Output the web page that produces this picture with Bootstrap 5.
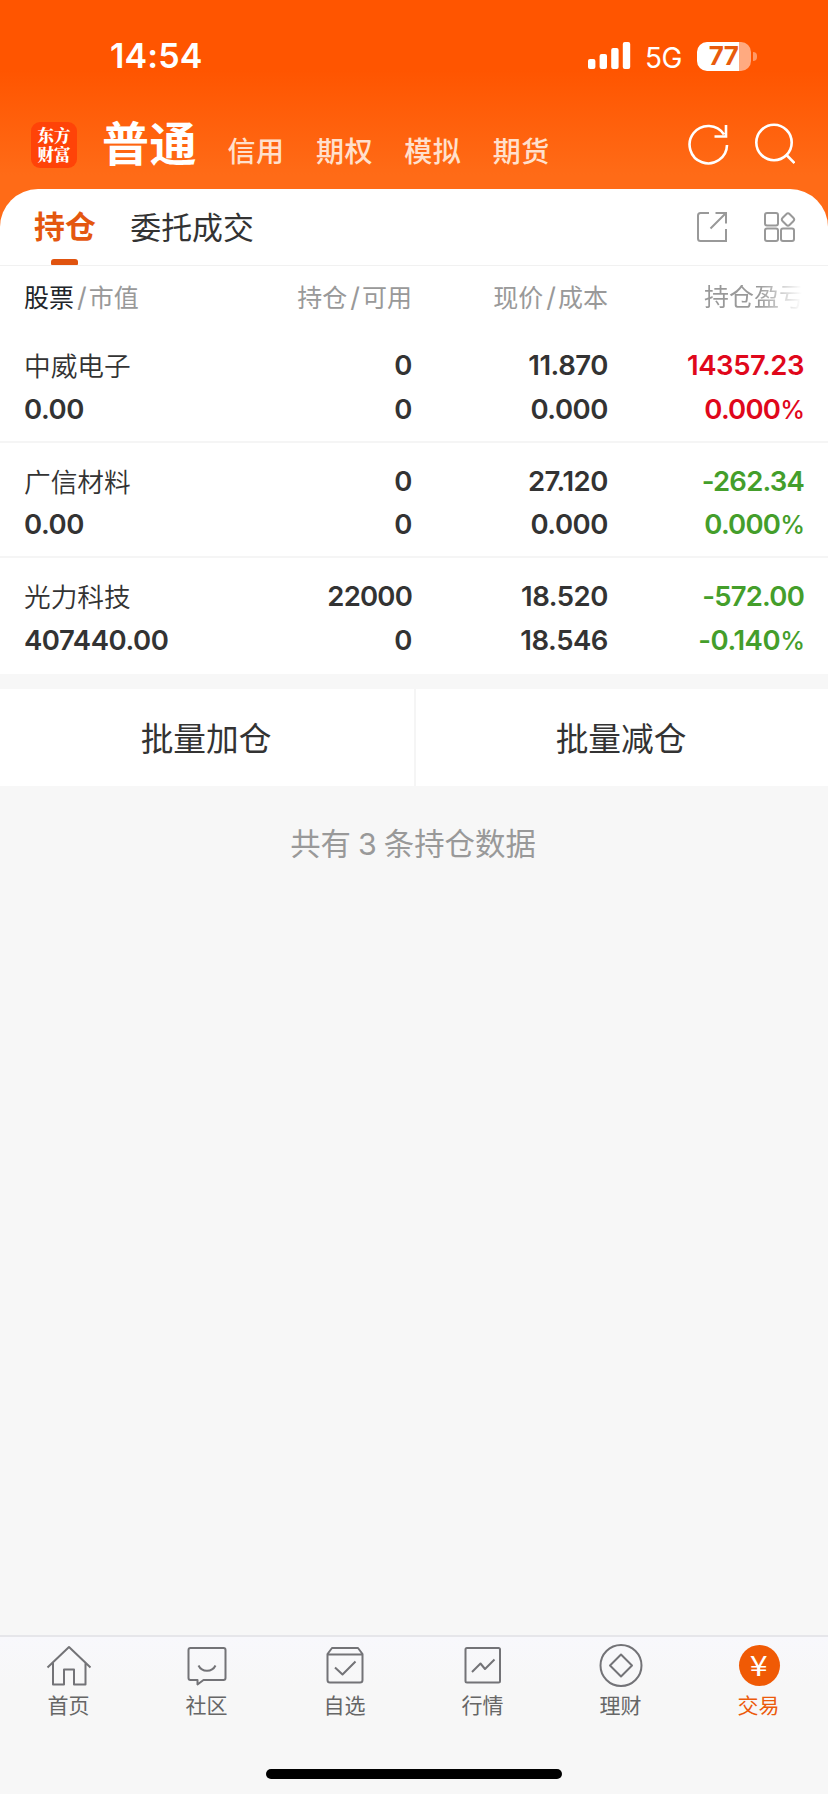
<!DOCTYPE html>
<html lang="zh-CN">
<head>
<meta charset="utf-8">
<meta name="viewport" content="width=device-width, initial-scale=1">
<title>持仓</title>
<link href="https://cdn.jsdelivr.net/npm/bootstrap@5.3.0/dist/css/bootstrap.min.css" rel="stylesheet">
<style>
body{font-family:Inter,"Noto Sans CJK SC",sans-serif;background:#f7f7f7;color:#333;line-height:1;white-space:nowrap}
.screen{height:1794px;overflow:hidden}
.hero{height:248px;background:linear-gradient(#ff5500 0,#ff5500 70px,#ff6b17 175px,#ff6b17 248px);color:#fff;margin-bottom:-59px;flex:none}
.statusbar{height:97px;padding:15px 71px 0 110px}
.clock{font-size:34px;font-weight:600;letter-spacing:.1px}
.net{font-size:28px;margin:3px 15px 0 14px;letter-spacing:-.5px}
.batt{width:54px;height:29px;border-radius:10px;background:linear-gradient(90deg,#fff 42px,#ffaa80 42px)}
.batt span{font-size:26px;font-weight:700;color:#e85a0c;letter-spacing:-.5px;margin-right:1px}
.nub{width:4px;height:9px;border-radius:0 5px 5px 0;background:#ff9966;margin-left:2px}
.appbar{height:92px;padding:1px 33px 0 31px}
.logo{width:46px;height:46px;border-radius:9px;background:#ff4308;font-size:16.5px;line-height:19.5px;font-weight:900;font-family:"Noto Serif CJK SC","Noto Sans CJK SC",serif;margin-top:3px}
.mode{font-size:47px;font-weight:700;margin-left:25px;letter-spacing:.5px}
.modes{font-size:28px;font-weight:500;color:#ffe0cd;gap:31.4px;margin:16px 0 0 30.5px;letter-spacing:.5px}
.sheet{background:#fff;border-radius:38px 38px 0 0;flex:none}
.tabs{height:77px;border-bottom:1px solid #f1f1f1;padding:0 32px 0 34px;font-size:30.9px}
.tab-on{color:#e4570f;font-weight:700;height:76px;padding-top:1px}
.tab-on::after{content:"";position:absolute;left:17px;bottom:0;width:27px;height:6px;border-radius:3px 3px 1px 1px;background:#e0530f}
.tab-off{margin-left:34.5px;padding-top:2px}
.holding{display:grid;grid-template-columns:200px 188px 196px 196px;padding:0 24px}
.heads{height:61px;align-items:center;font-size:25px;color:#999;padding-top:1px}
.heads i{font-style:normal;font-size:27px;margin:0 2px 0 3px}
.fade-end{background:linear-gradient(90deg,#999 150px,#fff 194px);-webkit-background-clip:text;background-clip:text;color:transparent}
.item{height:115.7px;border-bottom:2px solid #f5f5f5;font-size:27.5px;font-weight:600;letter-spacing:-.45px;padding-top:17px;grid-template-rows:43.5px 43.5px;line-height:43.5px}
.item:last-child{border-bottom:0}
.item .nm{font-size:26.7px;font-weight:350;letter-spacing:0;padding-top:1px}
.zero{letter-spacing:-.8px}
.pc{font-weight:500;font-size:25px;letter-spacing:-1px}
.up{color:#e0071b}.down{color:#449e2b}
.batch{height:97px;margin-top:15px;background:#fff;font-size:32.7px;flex:none}
.batch>div{padding:4px 2px 0 0}
.batch>div:last-child{border-left:2px solid #f5f5f5}
.total{font-size:30.4px;color:#999;margin:43px 2px 0 0;word-spacing:-1.5px}
.dock{height:159px;border-top:2px solid #e6e6ea;background:linear-gradient(#f8f8fc,#f7f7f7 50px);font-size:21px;color:#666}
.dock svg{width:48px;height:48px;fill:none;stroke:#737377;stroke-width:2;stroke-linejoin:round}
.dock .cell{width:138px;padding-top:5px}
.dock .cell span{margin:5px 1px 0 0}
.on{color:#ec5a0b}
.yen{width:41px;height:41px;margin:3px 0 4px;border-radius:50%;background:#f05a05;color:#fff}
.yen b{font:400 28px/1 "Noto Sans CJK SC",sans-serif;transform:translateY(-2px) scaleX(1.15)}
.homebar{width:296px;height:10px;border-radius:5px;background:#000;margin-bottom:15px}
</style>
</head>
<body>
<div class="screen d-flex flex-column">
  <header class="hero">
    <div class="statusbar d-flex align-items-center">
      <div class="clock me-auto">14:54</div>
      <svg width="43" height="28" fill="#fff"><rect x="0" y="17" width="7.4" height="10" rx="2"/><rect x="11.6" y="12" width="7.4" height="15" rx="2"/><rect x="23.2" y="6" width="7.4" height="21" rx="2"/><rect x="34.8" y="0" width="7.4" height="27" rx="2"/></svg>
      <div class="net">5G</div>
      <div class="batt d-flex align-items-center justify-content-center"><span>77</span></div><div class="nub"></div>
    </div>
    <nav class="appbar d-flex align-items-center">
      <div class="logo d-flex align-items-center justify-content-center"><div>东方<br>财富</div></div>
      <div class="mode">普通</div>
      <div class="modes d-flex me-auto"><span>信用</span><span>期权</span><span>模拟</span><span>期货</span></div>
      <svg width="108" height="44" fill="none" stroke="#fff" stroke-width="2.6"><path d="M40 23A18.7 18.7 0 1 1 37 12.5M27.500 14.500H39V3"/><circle cx="87" cy="20.500" r="17.700"/><path d="M99 32.500L107.500 41"/></svg>
    </nav>
  </header>
  <main class="sheet">
    <div class="tabs d-flex align-items-center">
      <div class="tab-on position-relative d-flex align-items-center">持仓</div>
      <div class="tab-off">委托成交</div>
      <svg class="ms-auto" width="100" height="34" fill="none" stroke="#999" stroke-width="2"><path d="M13 3H4.500Q2 3 2 5.500V28.500Q2 31 4.500 31H30V19M19.500 3H30V13.500M30 3L14.500 18.500"/><rect x="69" y="3" width="13" height="12.500" rx="2"/><rect x="69" y="18.500" width="13" height="12.500" rx="2"/><rect x="85" y="18.500" width="13" height="12.500" rx="2"/><rect x="87" y="4.500" width="10" height="10" rx="2.500" transform="rotate(45 92 9.500)"/></svg>
    </div>
    <div class="holding heads"><div><span class="text-dark">股票</span><i>/</i>市值</div><div class="text-end">持仓<i>/</i>可用</div><div class="text-end">现价<i>/</i>成本</div><div class="fade-end text-end">持仓盈亏</div></div>
    <section>
      <div class="holding item"><div class="nm">中威电子</div><div class="text-end">0</div><div class="text-end">11.870</div><div class="up text-end">14357.23</div><div>0.00</div><div class="text-end">0</div><div class="text-end">0.000</div><div class="up zero text-end">0.000<span class="pc">%</span></div></div>
      <div class="holding item"><div class="nm">广信材料</div><div class="text-end">0</div><div class="text-end">27.120</div><div class="down zero text-end">-262.34</div><div>0.00</div><div class="text-end">0</div><div class="text-end">0.000</div><div class="down zero text-end">0.000<span class="pc">%</span></div></div>
      <div class="holding item"><div class="nm">光力科技</div><div class="text-end zero">22000</div><div class="text-end">18.520</div><div class="down zero text-end">-572.00</div><div>407440.00</div><div class="text-end">0</div><div class="text-end">18.546</div><div class="down text-end">-0.140<span class="pc">%</span></div></div>
    </section>
  </main>
  <div class="batch d-flex align-items-center text-center">
    <div class="w-50 h-100 d-flex align-items-center justify-content-center">批量加仓</div>
    <div class="w-50 h-100 d-flex align-items-center justify-content-center">批量减仓</div>
  </div>
  <div class="total text-center">共有 3 条持仓数据</div>
  <footer class="dock mt-auto d-flex flex-column align-items-center">
    <nav class="d-flex mb-auto">
      <div class="cell d-flex flex-column align-items-center"><svg><path d="M2.500 25.500L24 5L45.500 25.500M8 21V42.500H19V27.500H29V42.500H40.500V21"/></svg><span>首页</span></div>
      <div class="cell d-flex flex-column align-items-center"><svg><path d="M7.500 6H40.500Q42.500 6 42.500 8V36Q42.500 38 40.500 38H20.500L14.500 42.500V38H7.500Q5.500 38 5.500 36V8Q5.500 6 7.500 6ZM15.500 23.500C19 30.500 29 30.500 32.500 23.500"/></svg><span>社区</span></div>
      <div class="cell d-flex flex-column align-items-center"><svg><path d="M6.500 12L11 6H37L41.500 12V38Q41.500 40.500 39 40.500H9Q6.500 40.500 6.500 38ZM6.500 12.500H41.500M14 25.500L21.500 32.500L34.500 19.500"/></svg><span>自选</span></div>
      <div class="cell d-flex flex-column align-items-center"><svg><rect x="6.500" y="6" width="34.500" height="34.500" rx="1.500"/><path d="M13 30L21.500 21.500L26 27L35.500 17.500"/></svg><span>行情</span></div>
      <div class="cell d-flex flex-column align-items-center"><svg><circle cx="24" cy="23.500" r="20.500"/><path d="M24 12.500L35 23.500L24 34.500L13 23.500Z"/></svg><span>理财</span></div>
      <div class="cell on d-flex flex-column align-items-center"><div class="yen d-flex align-items-center justify-content-center"><b>¥</b></div><span>交易</span></div>
    </nav>
    <div class="homebar"></div>
  </footer>
</div>
<script src="https://cdn.jsdelivr.net/npm/bootstrap@5.3.0/dist/js/bootstrap.bundle.min.js"></script>
</body>
</html>
